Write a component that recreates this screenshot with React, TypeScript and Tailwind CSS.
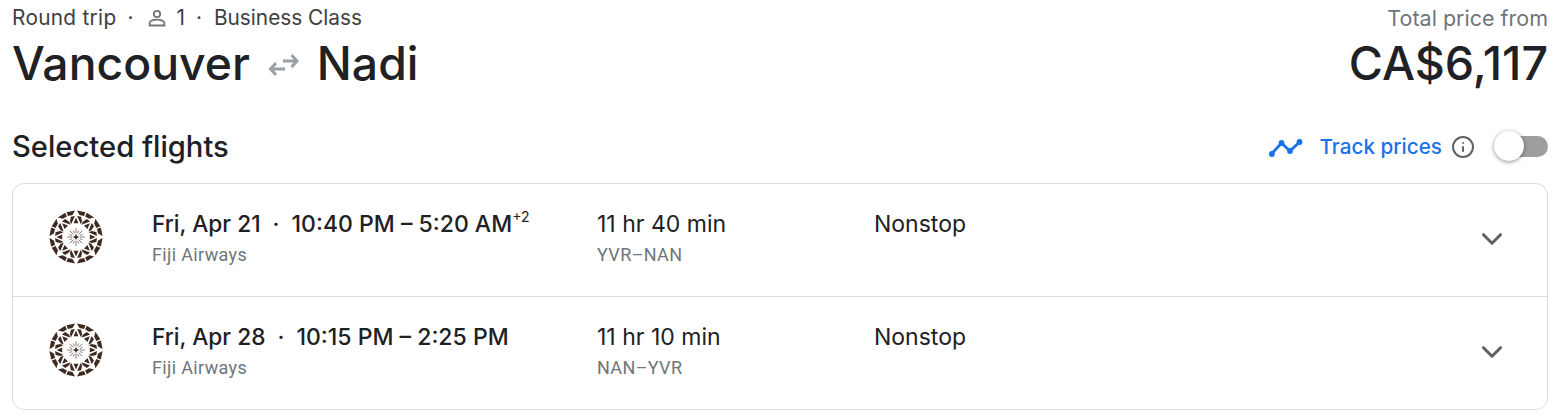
import { ChevronDown, Info } from 'lucide-react';

const flights = [
  { date: 'Fri, Apr 21', times: '10:40 PM – 5:20 AM', plus: '+2', duration: '11 hr 40 min', route: 'YVR–NAN' },
  { date: 'Fri, Apr 28', times: '10:15 PM – 2:25 PM', plus: '', duration: '11 hr 10 min', route: 'NAN–YVR' },
];

function polar(r: number, deg: number) {
  const a = (deg * Math.PI) / 180;
  return `${(30 + r * Math.sin(a)).toFixed(2)} ${(30 - r * Math.cos(a)).toFixed(2)}`;
}

function FijiLogo() {
  const sectors = Array.from({ length: 8 }, (_, i) => i * 45);
  const rays = Array.from({ length: 16 }, (_, i) => i * 22.5);
  return (
    <svg width="56" height="56" viewBox="0 0 60 60" fill="#3d2a20">
      {sectors.map((s) => (
        <g key={s}>
          <path d={`M${polar(28.5, s + 2)} L${polar(28.5, s + 21)} L${polar(24, s + 21)} L${polar(24, s + 9)} Z`} />
          <path d={`M${polar(28.5, s + 43)} L${polar(28.5, s + 24)} L${polar(24, s + 24)} L${polar(24, s + 36)} Z`} />
          <path d={`M${polar(22.5, s + 3)} L${polar(22.5, s + 14)} L${polar(18, s + 21)} L${polar(14.5, s + 21)} Z`} />
          <path d={`M${polar(22.5, s + 42)} L${polar(22.5, s + 31)} L${polar(18, s + 24)} L${polar(14.5, s + 24)} Z`} />
          <path d={`M${polar(21, s - 0)} L${polar(15, s + 10)} L${polar(15, s - 10)} Z`} />
        </g>
      ))}
      {rays.map((r, i) => (
        <path
          key={r}
          d={`M${polar(i % 2 ? 4.5 : 4, r)} L${polar(i % 2 ? 7.5 : 9.5, r)}`}
          stroke="#3d2a20"
          strokeWidth="1"
          opacity="0.65"
        />
      ))}
      <path d="M30 26.5 L31.5 30 L30 33.5 L28.5 30 Z M26.5 30 L30 28.5 L33.5 30 L30 31.5 Z" />
    </svg>
  );
}

function TrendIcon() {
  return (
    <svg width="34" height="24" viewBox="0 0 34 24" fill="none" stroke="#1a73e8" strokeWidth="2.8">
      <path d="M2.5 19 L12.5 8 L21 16 L30.5 7" />
      <circle cx="2.9" cy="19" r="2.9" fill="#1a73e8" stroke="none" />
      <circle cx="12.5" cy="8" r="2.9" fill="#1a73e8" stroke="none" />
      <circle cx="21" cy="16" r="2.9" fill="#1a73e8" stroke="none" />
      <circle cx="30.5" cy="7" r="2.9" fill="#1a73e8" stroke="none" />
    </svg>
  );
}

function PersonIcon() {
  return (
    <svg width="20" height="20" viewBox="0 0 20 20" fill="none" stroke="#70757a" strokeWidth="1.8">
      <circle cx="10" cy="6" r="3.2" />
      <path d="M2.6 17.5 V15 C2.6 12.6 7 11.6 10 11.6 C13 11.6 17.4 12.6 17.4 15 V17.5 Z" />
    </svg>
  );
}

function SwapIcon() {
  return (
    <svg width="32" height="26" viewBox="0 0 32 26" fill="none" stroke="#9aa0a6" strokeWidth="3">
      <path d="M15 10 H29 M23.5 4 L29 10 L23.5 16" />
      <path d="M17 18 H2.5 M8 12 L2.5 18 L8 24" />
    </svg>
  );
}

function FlightRow({ flight }: { flight: (typeof flights)[number] }) {
  return (
    <div className="flex h-[113px] items-start text-[#202124] last:h-[112px]">
      <div className="flex w-[126px] shrink-0 justify-center pt-[25px]">
        <FijiLogo />
      </div>
      <div className="ml-[13px] w-[445px] shrink-0 pt-[24px]">
        <div className="flex h-[32px] items-start text-[23px] leading-[32px] font-medium">
          <span className="text-[22.7px]">{flight.date}</span>
          <span className="mx-[12px]">·</span>
          <span>{flight.times}</span>
          {flight.plus && <sup className="top-[-1px] text-[14px] leading-[20px] font-normal">{flight.plus}</sup>}
        </div>
        <div className="mt-[3px] font-['Roboto',sans-serif] text-[18px] leading-[24px] tracking-[0.35px] text-[#70757a]">Fiji Airways</div>
      </div>
      <div className="w-[277px] shrink-0 pt-[24px]">
        <div className="text-[23px] leading-[32px]">{flight.duration}</div>
        <div className="mt-[3px] font-['Roboto',sans-serif] text-[18px] leading-[24px] tracking-[0.35px] text-[#70757a]">{flight.route}</div>
      </div>
      <div className="flex-1 pt-[24px] text-[23px] leading-[32px]">Nonstop</div>
      <div className="pt-[38px] pr-[38px] text-[#5f6368]">
        <ChevronDown size={34} strokeWidth={2.2} />
      </div>
    </div>
  );
}

export default function App() {
  return (
    <div className="h-[418px] overflow-hidden bg-white pr-[7px] pl-[12px] font-['Inter',sans-serif] text-[#202124]">
      <div className="flex items-start justify-between">
        <div>
          <div className="flex h-[36px] items-center text-[20.8px] text-[#3c4043]">
            <span className="tracking-[0.3px]">Round trip</span>
            <span className="mx-[11px]">·</span>
            <span className="mr-[9px] ml-[3px]"><PersonIcon /></span>
            <span>1</span>
            <span className="mr-[12px] ml-[11px]">·</span>
            <span>Business Class</span>
          </div>
          <div className="flex h-[54px] items-center text-[46.3px] leading-[54px] font-[450]">
            <span>Vancouver</span>
            <span className="mt-[2px] mr-[17px] ml-[18px]"><SwapIcon /></span>
            <span>Nadi</span>
          </div>
        </div>
        <div className="text-right">
          <div className="flex h-[36px] items-center justify-end text-[21.5px] text-[#70757a]">Total price from</div>
          <div className="h-[54px] text-[46.6px] leading-[54px] font-[450]">CA$6,117</div>
        </div>
      </div>

      <div className="mt-[35px] flex h-[44px] items-center justify-between">
        <h2 className="text-[29.2px] font-[450]">Selected flights</h2>
        <div className="flex items-center">
          <TrendIcon />
          <span className="ml-[16px] text-[20.7px] font-medium text-[#1a73e8]">Track prices</span>
          <Info size={24} strokeWidth={2} className="mr-[25px] ml-[9px] text-[#5f6368]" />
          <div className="relative h-[21px] w-[48px] rounded-full bg-[#9e9e9e]">
            <div className="absolute top-[-5px] left-[-6px] h-[30px] w-[30px] rounded-full bg-white shadow-[0_1px_4px_rgba(0,0,0,0.45)]" />
          </div>
        </div>
      </div>

      <div className="mt-[14px] divide-y divide-[#dadce0] overflow-hidden rounded-[12px] border border-[#dadce0]">
        {flights.map((f) => (
          <FlightRow key={f.route} flight={f} />
        ))}
      </div>
    </div>
  );
}
